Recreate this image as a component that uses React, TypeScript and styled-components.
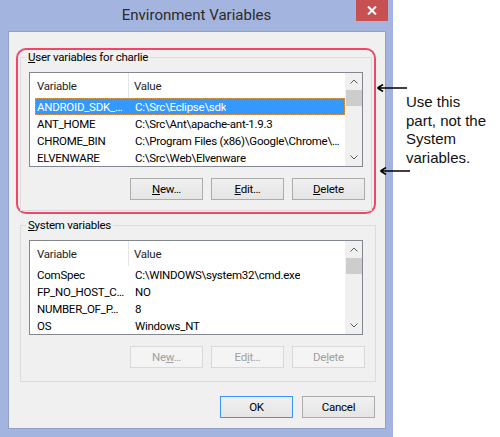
import React from "react";
import styled, { createGlobalStyle, css } from "styled-components";

type Pair = { name: string; value: string };

const userVars: Pair[] = [
  { name: "ANDROID_SDK_…", value: "C:\\Src\\Eclipse\\sdk" },
  { name: "ANT_HOME", value: "C:\\Src\\Ant\\apache-ant-1.9.3" },
  { name: "CHROME_BIN", value: "C:\\Program Files (x86)\\Google\\Chrome\\…" },
  { name: "ELVENWARE", value: "C:\\Src\\Web\\Elvenware" },
];

const systemVars: Pair[] = [
  { name: "ComSpec", value: "C:\\WINDOWS\\system32\\cmd.exe" },
  { name: "FP_NO_HOST_C…", value: "NO" },
  { name: "NUMBER_OF_P…", value: "8" },
  { name: "OS", value: "Windows_NT" },
];

export default function App() {
  return (
    <>
      <GlobalStyle />
      <Page>
        <Window>
          <TitleBar>
            <span />
            <Title>Environment Variables</Title>
            <CloseButton>
              <svg width="10" height="9" viewBox="0 0 10 9">
                <path d="M1 0.5 L9 8.5 M9 0.5 L1 8.5" stroke="#fff" strokeWidth="2" />
              </svg>
            </CloseButton>
          </TitleBar>

          <Client>
            <Highlight>
              <Group $width={352} $bottom={10}>
                <Legend>
                  <u>U</u>ser variables for charlie
                </Legend>
                <VarList rows={userVars} selected={0} />
                <ButtonRow>
                  <Button><u>N</u>ew…</Button>
                  <Button><u>E</u>dit…</Button>
                  <Button><u>D</u>elete</Button>
                </ButtonRow>
              </Group>
            </Highlight>

            <SystemGroup $width={356} $bottom={13}>
              <Legend>
                <u>S</u>ystem variables
              </Legend>
              <VarList rows={systemVars} />
              <ButtonRow>
                <Button disabled>Ne<u>w</u>…</Button>
                <Button disabled>Ed<u>i</u>t…</Button>
                <Button disabled>De<u>l</u>ete</Button>
              </ButtonRow>
            </SystemGroup>

            <Footer>
              <Button $focused>OK</Button>
              <Button>Cancel</Button>
            </Footer>
          </Client>
        </Window>

        <Note>
          Use this
          <br />
          part, not the
          <br />
          System
          <br />
          variables.
        </Note>

        <Arrow $top={84} $left={376}>
          <svg width="32" height="8" viewBox="0 0 32 8">
            <path d="M1.5 4 L31 4 M1.5 4 L7 0.5 M1.5 4 L7 7.5" stroke="#000" strokeWidth="1.6" fill="none" />
          </svg>
        </Arrow>
        <Arrow $top={167} $left={379}>
          <svg width="32" height="8" viewBox="0 0 32 8">
            <path d="M1.5 4 L31 4 M1.5 4 L7 0.5 M1.5 4 L7 7.5" stroke="#000" strokeWidth="1.6" fill="none" />
          </svg>
        </Arrow>
      </Page>
    </>
  );
}

function VarList({ rows, selected }: { rows: Pair[]; selected?: number }) {
  return (
    <ListBox>
      <ListBody>
        <Header>
          <HeaderCell $first>Variable</HeaderCell>
          <HeaderCell>Value</HeaderCell>
        </Header>
        {rows.map((r, i) => (
          <Row key={r.name} $selected={i === selected}>
            <NameCell>{r.name}</NameCell>
            <ValueCell>{r.value}</ValueCell>
          </Row>
        ))}
      </ListBody>
      <ScrollBar>
        <ArrowBtn>
          <svg width="8" height="5" viewBox="0 0 8 5">
            <path d="M0.5 4.5 L4 1 L7.5 4.5" stroke="#606060" fill="none" />
          </svg>
        </ArrowBtn>
        <Thumb />
        <Track />
        <ArrowBtn>
          <svg width="8" height="5" viewBox="0 0 8 5">
            <path d="M0.5 0.5 L4 4 L7.5 0.5" stroke="#606060" fill="none" />
          </svg>
        </ArrowBtn>
      </ScrollBar>
    </ListBox>
  );
}

const GlobalStyle = createGlobalStyle`
  * { box-sizing: border-box; }
  html, body {
    margin: 0;
    background: #fff;
  }
`;

const uiFont = `Roboto, "Noto Sans", sans-serif`;

const Page = styled.div`
  position: relative;
  display: flex;
  width: 500px;
  height: 437px;
  overflow: hidden;
  font-family: ${uiFont};
`;

const Window = styled.div`
  width: 393px;
  height: 437px;
  background: #a3b5de;
  display: flex;
  flex-direction: column;
`;

const TitleBar = styled.div`
  height: 31px;
  display: grid;
  grid-template-columns: 1fr auto 1fr;
  align-items: start;
`;

const Title = styled.div`
  padding-top: 6px;
  font-size: 15px;
  color: #2b2b2b;
  white-space: nowrap;
`;

const CloseButton = styled.div`
  justify-self: end;
  margin-right: 5px;
  width: 32px;
  height: 21px;
  background: #c75050;
  display: flex;
  align-items: center;
  justify-content: center;
`;

const Client = styled.div`
  height: 398px;
  margin: 0 7px 0 8px;
  background: #f0f0f0;
  border: 1px solid #8fa1cb;
  padding-top: 16px;
  display: flex;
  flex-direction: column;
  font-size: 11.5px;
  letter-spacing: -0.25px;
  color: #000;
`;

const Highlight = styled.div`
  margin-left: 7px;
  width: 360px;
  height: 166px;
  border: 2px solid #f0466a;
  border-radius: 10px;
  padding: 0 2px;
`;

const Group = styled.fieldset<{ $width: number; $bottom: number }>`
  margin: 0;
  width: ${(p) => p.$width}px;
  min-width: 0;
  border: 1px solid #dcdcdc;
  padding: 7px 0 ${(p) => p.$bottom}px 8px;
`;

const SystemGroup = styled(Group)`
  margin: 4px 0 0 11px;
`;

const Legend = styled.legend`
  padding: 0 2px;
  margin-left: -3px;
  line-height: 15px;
`;

const ListBox = styled.div`
  width: 334px;
  height: 95px;
  border: 1px solid #828790;
  background: #fff;
  display: flex;
`;

const ListBody = styled.div`
  flex: 1;
  display: flex;
  flex-direction: column;
  overflow: hidden;
`;

const Header = styled.div`
  height: 25px;
  display: flex;
  flex-shrink: 0;
`;

const HeaderCell = styled.div<{ $first?: boolean }>`
  display: flex;
  align-items: center;
  color: #1e1e1e;
  ${(p) =>
    p.$first
      ? css`
          width: 99px;
          flex-shrink: 0;
          padding-left: 7px;
          border-right: 1px solid #e5e5e5;
        `
      : css`
          padding-left: 5px;
        `}
`;

const Row = styled.div<{ $selected?: boolean }>`
  height: 17px;
  flex-shrink: 0;
  margin-left: 5px;
  display: flex;
  align-items: center;
  white-space: nowrap;
  ${(p) =>
    p.$selected &&
    css`
      background: #3399ff;
      color: #fff;
      outline: 1px dotted #d89a4a;
      outline-offset: -1px;
    `}
`;

const NameCell = styled.div`
  width: 94px;
  flex-shrink: 0;
  padding-left: 2px;
  overflow: hidden;
`;

const ValueCell = styled.div`
  padding-left: 6px;
  overflow: hidden;
`;

const ScrollBar = styled.div`
  width: 17px;
  flex-shrink: 0;
  background: #f0f0f0;
  display: flex;
  flex-direction: column;
`;

const ArrowBtn = styled.div`
  height: 17px;
  display: flex;
  align-items: center;
  justify-content: center;
`;

const Thumb = styled.div`
  height: 16px;
  margin-left: 1px;
  background: #cdcdcd;
`;

const Track = styled.div`
  flex: 1;
`;

const ButtonRow = styled.div`
  display: flex;
  justify-content: flex-end;
  gap: 8px;
  margin: 11px -2px 0 0;
  width: 336px;
`;

const Button = styled.button<{ $focused?: boolean }>`
  width: 73px;
  height: 22px;
  padding: 0;
  font-family: ${uiFont};
  font-size: 11.5px;
  letter-spacing: -0.25px;
  color: #000;
  border: 1px solid ${(p) => (p.$focused ? "#3399ff" : "#acacac")};
  background: linear-gradient(#f0f0f0, #e5e5e5);
  &:disabled {
    color: #a0a0a0;
    border-color: #d9d9d9;
    background: #f4f4f4;
  }
`;

const Footer = styled.div`
  display: flex;
  justify-content: flex-end;
  gap: 9px;
  margin-top: 14px;
  padding-right: 10px;
`;

const Note = styled.div`
  padding: 93px 0 0 13px;
  font-family: "Liberation Sans", Arial, sans-serif;
  font-size: 15px;
  line-height: 18.5px;
  color: #111;
`;

const Arrow = styled.div<{ $top: number; $left: number }>`
  position: absolute;
  top: ${(p) => p.$top}px;
  left: ${(p) => p.$left}px;
  line-height: 0;
`;
